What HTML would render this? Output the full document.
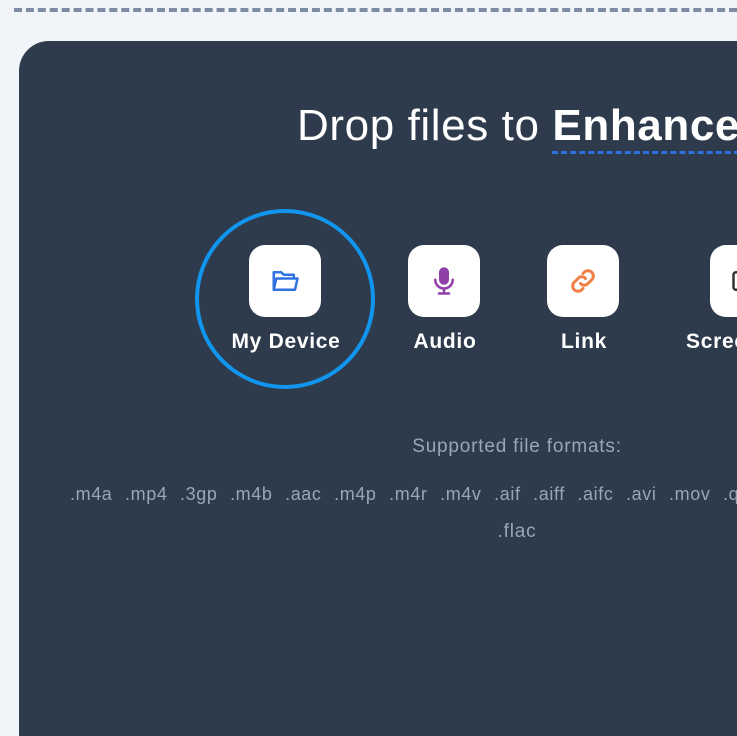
<!DOCTYPE html>
<html style="overflow:hidden"><head><style>
body{margin:0;width:737px;height:736px;overflow:hidden;background:#f1f4f9;font-family:"Liberation Sans",sans-serif;position:relative}
.dash{position:absolute;left:14px;top:8px;width:723px;height:0;border-top:4px dashed #7d8ba3}
.panel{position:absolute;left:19px;top:41px;width:718px;height:695px;background:#2e3b4c;border-radius:30px 0 0 0}
.t{position:absolute;left:297px;top:101px;font-size:44px;letter-spacing:0.6px;color:#fff;white-space:nowrap}
.t b{border-bottom:3px dashed #2f6fe0;padding-bottom:1px}
.tile{position:absolute;top:245px;width:72px;height:72px;background:#fff;border-radius:16px;display:flex;align-items:center;justify-content:center}
.lab{position:absolute;top:330px;font-size:21px;letter-spacing:0.7px;font-weight:bold;color:#fff;white-space:nowrap;transform:translateX(-50%)}
.ring{position:absolute;left:195px;top:209px;width:172px;height:172px;border:4px solid #1196f0;border-radius:50%}
.s{position:absolute;left:0;width:1034px;text-align:center;color:#9aa6b6;font-size:19px;letter-spacing:0.8px;white-space:nowrap}
.clip{position:absolute;left:0;top:0;width:737px;height:736px;overflow:hidden}
</style></head><body><div class="clip">
<div class="dash"></div>
<div class="panel"></div>
<div class="t">Drop files to <b>Enhance</b></div>
<div class="ring"></div>
<div class="tile" style="left:249px"><svg width="34" height="30" viewBox="0 0 24 24" fill="none" stroke="#2f72e0" stroke-width="2" stroke-linejoin="round"><path d="M3 19V5h6l2 2h8v3"/><path d="M3 19l2-9h17l-2 9z"/></svg></div>
<div class="tile" style="left:408px"><svg width="30" height="34" viewBox="0 0 24 24" fill="none" stroke="#8e3fa8" stroke-width="2" stroke-linecap="round"><rect x="9" y="2" width="6" height="12" rx="3" fill="#8e3fa8"/><path d="M5 11a7 7 0 0 0 14 0M12 18v4M8 22h8"/></svg></div>
<div class="tile" style="left:547px"><svg width="30" height="30" viewBox="0 0 24 24" fill="none" stroke="#f07e45" stroke-width="2.4" stroke-linecap="round"><path d="M10 14a4 4 0 0 0 6 0l3-3a4 4 0 0 0-6-6l-1 1"/><path d="M14 10a4 4 0 0 0-6 0l-3 3a4 4 0 0 0 6 6l1-1"/></svg></div>
<div class="tile" style="left:710px"><svg width="30" height="30" viewBox="0 0 24 24" fill="none" stroke="#333" stroke-width="2"><rect x="2" y="5" width="14" height="14" rx="2"/></svg></div>
<div class="lab" style="left:286px">My Device</div>
<div class="lab" style="left:445px">Audio</div>
<div class="lab" style="left:584px">Link</div>
<div class="lab" style="left:686px;transform:none">Screen</div>
<div class="s" style="top:436px">Supported file formats:</div>
<div style="position:absolute;left:70px;top:484px;color:#9aa6b6;font-size:18px;letter-spacing:0.6px;white-space:nowrap;word-spacing:7px">.m4a .mp4 .3gp .m4b .aac .m4p .m4r .m4v .aif .aiff .aifc .avi .mov .qt</div>
<div class="s" style="top:521px">.flac</div>
</div></body></html>
